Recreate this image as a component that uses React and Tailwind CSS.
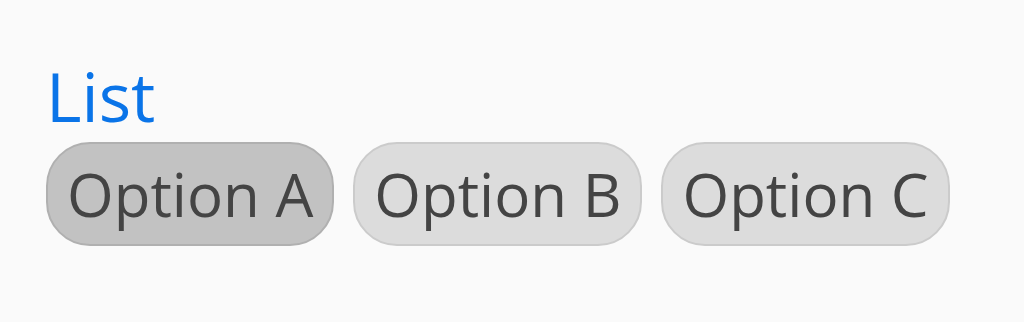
import React, { useState } from 'react';

const options = ['Option A', 'Option B', 'Option C'];

const App = () => {
  const [selected, setSelected] = useState(0);

  return (
    <div className="min-h-[322px] w-full bg-[#fafafa] px-[46px] pt-[60px] font-['Open_Sans',sans-serif]">
      <h1 className="text-[68px] leading-[72px] text-[#0a74e8]">List</h1>
      <div className="mt-[10px] flex gap-[19px]">
        {options.map((opt, i) => (
          <button
            key={opt}
            onClick={() => setSelected(i)}
            className={
              i === selected
                ? 'h-[104px] whitespace-nowrap rounded-[44px] border-2 border-[#b0b0b0] bg-[#c2c2c2] px-[19px] text-[60px] leading-none text-[#444444]'
                : 'h-[104px] whitespace-nowrap rounded-[44px] border-2 border-[#cbcbcb] bg-[#dcdcdc] px-[19px] text-[60px] leading-none text-[#444444]'
            }
          >
            {opt}
          </button>
        ))}
      </div>
    </div>
  );
};

export default App;
